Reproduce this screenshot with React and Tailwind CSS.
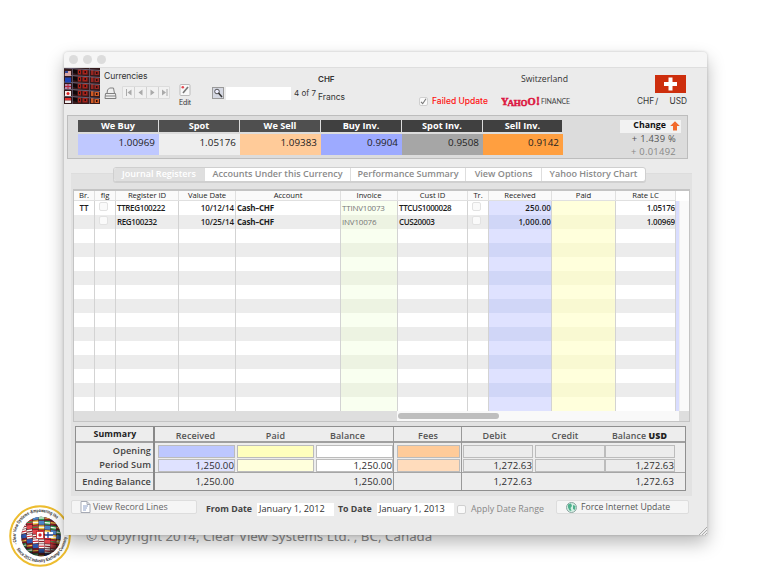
import React from "react";

const rates = [
  ["We Buy", "1.00969", "w-[81px]", "bg-[#4f4f4f]", "bg-[#bfc8ff]"],
  ["Spot", "1.05176", "w-[81px]", "bg-[#4f4f4f]", "bg-[#eeeeee]"],
  ["We Sell", "1.09383", "w-[81px]", "bg-[#4f4f4f]", "bg-[#ffcb99]"],
  ["Buy Inv.", "0.9904", "w-[81px]", "bg-[#404040]", "bg-[#9daaff]"],
  ["Spot Inv.", "0.9508", "w-[81px]", "bg-[#404040]", "bg-[#a6a6a6]"],
  ["Sell Inv.", "0.9142", "w-[80px]", "bg-[#404040]", "bg-[#ff9f40]"],
];

const plain = ["bg-white", "bg-[#ececec]"];
const columns = [
  { t: "Br.", w: "w-[21px]", bg: plain, cells: ["TT", ""], c: "text-center font-semibold" },
  { t: "flg", w: "w-[21px]", bg: plain, check: true },
  { t: "Register ID", w: "w-[63px]", bg: plain, cells: ["TTREG100222", "REG100232"], c: "pl-px tracking-[-0.35px] font-semibold" },
  { t: "Value Date", w: "w-[57px]", bg: plain, cells: ["10/12/14", "10/25/14"], c: "text-right pr-px tracking-[-0.05px] font-semibold" },
  { t: "Account", w: "w-[105px]", bg: plain, cells: ["Cash–CHF", "Cash–CHF"], c: "pl-px font-bold tracking-[-0.25px]" },
  { t: "Invoice", w: "w-[57px]", bg: ["bg-[#f9fff0]", "bg-[#edf3e2]"], cells: ["TTINV10073", "INV10076"], c: "pl-px text-[#777] tracking-[-0.2px] font-medium" },
  { t: "Cust ID", w: "w-[70px]", bg: plain, cells: ["TTCUS1000028", "CUS20003"], c: "pl-px tracking-[-0.35px] font-semibold" },
  { t: "Tr.", w: "w-[21px]", bg: plain, check: true },
  { t: "Received", w: "w-[63px]", bg: ["bg-[#dfe2ff]", "bg-[#d0d6f7]"], cells: ["250.00", "1,000.00"], c: "text-right pr-0 tracking-[0.1px] font-semibold" },
  { t: "Paid", w: "w-[64px]", bg: ["bg-[#ffffdc]", "bg-[#f9f9d2]"], cells: ["", ""], c: "" },
  { t: "Rate LC", w: "w-[60px]", bg: plain, cells: ["1.05176", "1.00969"], c: "text-right pr-0 tracking-[-0.2px] font-semibold" },
];
const rows = Array.from({ length: 15 }, (_, i) => i);

function Check({ on, faint }) {
  return (
    <span className={`flex h-[9px] w-[9px] items-center justify-center rounded-[2px] border bg-[#fafafa] ${faint ? "border-[#e2e2e2]" : "border-[#d0d0d0]"}`}>
      {on && (
        <svg width="7" height="7" viewBox="0 0 7 7"><path d="M1 3.8 2.7 5.7 6 .8" fill="none" stroke="#777" strokeWidth="1.1" /></svg>
      )}
    </span>
  );
}

function Photo() {
  return (
    <svg width="36" height="36" viewBox="0 0 36 36" className="block">
      <rect width="36" height="36" fill="#351a1c" />
      {[0, 7, 14, 21, 28].map((y) => (
        <g key={y}>
          <path d={`M9 ${y + 1}L13 ${y + 2}V${y + 6}L9 ${y + 5}Z`} fill="#100709" />
          <path d={`M14 ${y + 1.5}h3v5h-3zM18.500 ${y + 2}h5v4.500h-5z`} fill="#a3221a" />
          <path d={`M20.500 ${y + 3}h1.500v2h-1.500zM15 ${y + 3}h1v2h-1z`} fill="#280b0b" />
          <path d={`M27 ${y + 2}h2.500v5h-2.500zM30.500 ${y + 3}h4.500v4h-4.500z`} fill={y > 14 ? "#d05a24" : "#962621"} />
          <path d={`M32 ${y + 4}h1.500v2h-1.500z`} fill="#280b0b" />
          <path d={`M0 ${y}L36 ${y + 2.500}`} stroke="#77738b" strokeWidth=".8" />
        </g>
      ))}
      <path d="M25.500 0V36M8.500 0V36" stroke="#625c70" strokeWidth=".8" />
      <path d="M1 3h6v5H1z" fill="#d9a8a5" /><path d="M1 3h3v2H1z" fill="#344a99" />
      <path d="M1 9.500h6v5H1z" fill="#1b44b4" />
      <path d="M1 16h6v5H1z" fill="#b28fae" /><path d="M1 18.500h6M4 16v5" stroke="#b8233a" />
      <path d="M1 23h6v5H1z" fill="#f4f0ee" /><circle cx="4" cy="25.500" r="1.500" fill="#d22" />
      <path d="M1 30h6v2.500H1z" fill="#e03030" /><path d="M1 32.500h6V35H1z" fill="#f0f0f0" />
    </svg>
  );
}

function Globe() {
  const colors = ["#cf2730", "#f6f4f0", "#2d57ae", "#2f9a52", "#f0c544", "#e0444c", "#ffffff", "#8a2028", "#4a86c8"];
  const cells = [];
  for (let r = 0; r < 9; r++) for (let c = 0; c < 7; c++) cells.push([r, c]);
  return (
    <svg width="64" height="64" viewBox="0 0 64 64" className="overflow-visible">
      <defs>
        <clipPath id="ball"><circle cx="33" cy="32.500" r="19.800" /></clipPath>
        <radialGradient id="shade" cx=".45" cy=".4" r=".6">
          <stop offset=".65" stopColor="#000" stopOpacity="0" /><stop offset="1" stopColor="#000" stopOpacity=".7" />
        </radialGradient>
        <path id="ringTop" d="M9.200 40A23.800 23.800 0 0 1 54.500 24" />
        <path id="ringBottom" d="M8.500 45A27 27 0 0 0 58.500 28" />
      </defs>
      <circle cx="32" cy="32" r="29.800" fill="#fff" stroke="#edbd30" strokeWidth="2" />
      <g clipPath="url(#ball)">
        <rect x="12" y="11" width="44" height="44" fill="#5a1f26" />
        {cells.map(([r, c]) => (
          <g key={`${r}-${c}`} transform={`translate(${12.500 + c * 6.100} ${12 + r * 4.700}) rotate(${(c - 3) * 4})`}>
            <rect width="5.500" height="4" fill={colors[(r * 5 + c * 4) % 9]} />
            <rect y="1.400" width="5.500" height="1.200" fill={colors[(r * 2 + c * 7 + 3) % 9]} />
          </g>
        ))}
        <rect x="28.500" y="27.500" width="7" height="7" fill="#fff" stroke="#c22" strokeWidth=".8" /><circle cx="32" cy="31" r="1.700" fill="#d3202b" />
        <rect x="37" y="28" width="8" height="6" fill="#fff" /><path d="M37 31h8M40 28v6" stroke="#1d4597" strokeWidth="1.300" />
        <circle cx="33" cy="32.500" r="19.800" fill="url(#shade)" />
      </g>
      <g fill="#222" fontFamily="Liberation Sans, sans-serif" fontWeight="bold" fontSize="4.600">
        <text><textPath href="#ringTop" textLength="64" lengthAdjust="spacingAndGlyphs">- Clear View Systems -Empowering the</textPath></text>
        <text><textPath href="#ringBottom" textLength="68" lengthAdjust="spacingAndGlyphs">Since 2012 Industry Exchange Currency</textPath></text>
      </g>
    </svg>
  );
}

function Header() {
  return (
    <div className="flex h-[47px] font-['Inter','Liberation_Sans',sans-serif] text-[9px] leading-[12px] text-[#333]">
      <Photo />
      <div className="ml-[4px] mt-[2px] w-[109px]">
        <div className="text-[8.600px] tracking-[-0.1px]">Currencies</div>
        <div className="flex items-start">
          <svg width="13" height="13" viewBox="0 0 13 13" className="mt-[5px]" fill="none" stroke="#808080" strokeWidth="1">
            <path d="M3 6.500 3.500 3l2-2h4l1 5.500M1.500 6.500h10l.5 5H1zM1.500 9h10" fill="#eee" />
          </svg>
          <svg width="48" height="13" viewBox="0 0 48 13" className="ml-[5px] mt-[4px]">
            <path d="M.5.5h47v12H.5z" fill="#f1f1f1" stroke="#dcdcdc" /><path d="M12.500 1v11M24.500 1v11M36.500 1v11" stroke="#d2d2d2" />
            <path d="M9.500 3.500v6L5.500 6.500zM20.500 3.500v6l-4-3zM28.500 3.500v6l4-3zM40 3.500v6l4-3z" fill="#aaa" />
            <path d="M4.500 3v7M45 3v7" stroke="#aaa" />
          </svg>
          <div className="ml-[7px] mt-[2px] flex w-[16px] flex-col items-center">
            <svg width="12" height="12" viewBox="0 0 12 12" className="shrink-0">
              <rect x="1" y=".5" width="10" height="11" rx="1" fill="#f8f8f8" stroke="#bbb" />
              <path d="m4 9 5-6" stroke="#777" strokeWidth="1.600" /><circle cx="3.800" cy="3.200" r="1.300" fill="#e54850" />
            </svg>
            <span className="pt-px text-[7px] leading-[11px] tracking-[-0.1px]">Edit</span>
          </div>
        </div>
      </div>
      <div className="mt-[19px] flex h-[13px]">
        <svg width="12" height="12" viewBox="0 0 12 12" className="ml-[-1px]">
          <rect x=".5" y=".5" width="11" height="11" fill="#d5d8e2" stroke="#9a9a9a" />
          <circle cx="5" cy="4.500" r="2.300" fill="#eef" stroke="#555" /><path d="m6.500 6 3.500 4" stroke="#333" strokeWidth="1.500" />
        </svg>
        <div className="ml-[2px] h-[13px] w-[65px] bg-white" />
        <span className="ml-[3px] w-[24px] whitespace-nowrap text-[8px]">4 of 7</span>
      </div>
      <div className="w-[101px]">
        <div className="mt-[5px] text-[8px] font-semibold">CHF</div>
        <div className="mt-[6px] text-[8.500px]">Francs</div>
      </div>
      <div className="mt-[27px] flex h-[12px] items-center">
        <Check on />
        <span className="ml-[4px] w-[69px] whitespace-nowrap text-[8.500px] font-medium text-[#ff1111]">Failed Update</span>
      </div>
      <div className="w-[136px]">
        <div className="mt-[5px] pl-[20px] font-['Open_Sans',sans-serif] text-[8.700px]">Switzerland</div>
        <div className="mt-[10px] flex h-[12px] items-center">
          <svg width="40" height="13" viewBox="0 0 40 13">
            <g fill="#dc1640" stroke="#dc1640" strokeWidth=".5" fontFamily="Liberation Serif, serif" fontWeight="bold">
              <text x="0" y="9.500" fontSize="10.500">Y</text><text x="6.500" y="10.500" fontSize="9">A</text>
              <text x="12.800" y="10.500" fontSize="9">H</text><text x="19.800" y="10.500" fontSize="8.500">O</text>
              <text x="26.500" y="10" fontSize="10.500">O</text><text x="35" y="10" fontSize="12">!</text>
            </g>
          </svg>
          <span className="font-['Lato',sans-serif] text-[7px] tracking-[-0.15px] text-[#444]">FINANCE</span>
        </div>
      </div>
      <div className="flex flex-col items-center pt-[7px]">
        <svg width="31" height="18" viewBox="0 0 31 18" className="ml-[16px]">
          <rect width="31" height="18" fill="#cd2e0d" /><path d="M15.500 2.500v13M9 9h13" stroke="#fff" strokeWidth="4" />
        </svg>
        <div className="mt-[2px] flex w-[50px] justify-between text-[8.300px]"><span>CHF<span className="ml-[1px]">/</span></span><span>USD</span></div>
      </div>
    </div>
  );
}

function Rates() {
  return (
    <div className="ml-[3px] flex h-[44px] w-[621px] border border-[#bdbdbd] bg-[#dcdcdc] pl-[10px] pt-[4px]">
      {rates.map(([t, v, w, h, b]) => (
        <div key={t} className={w}>
          <div className={`${h} mr-px flex h-[12px] items-center justify-center text-[9.200px] font-bold text-white`}>{t}</div>
          <div className={`${b} mt-[2px] h-[21px] pr-[4px] pt-[3px] text-right text-[9.800px] font-medium leading-[12px] tracking-[0.05px] text-[#222]`}>{v}</div>
        </div>
      ))}
      <div className="ml-[57px] w-[61px] text-right">
        <div className="flex h-[13px] items-center justify-end bg-[#f2f2f2] pb-px pr-[1px] text-[8.800px] font-bold text-[#111]">
          Change
          <svg width="10" height="10" viewBox="0 0 10 10" className="ml-[4px]"><path d="M5 .3 9.800 5H7v4.500H3V5H.2z" fill="#f26a2c" /></svg>
        </div>
        <div className="pr-[5px] text-[9.400px] leading-[12.500px] tracking-[0.25px] text-[#555]">+ 1.439 %</div>
        <div className="pr-[5px] text-[9.400px] leading-[12.500px] tracking-[0.3px] text-[#888]">+ 0.01492</div>
      </div>
    </div>
  );
}

function Table() {
  return (
    <div className="mx-[2px] h-[233px] border border-t-2 border-[#c4c4c4] bg-[#dedede] text-[8px] leading-[12px] text-[#1c1c1c]">
      <div className="flex h-[220px] bg-white">
        {columns.map((col) => (
          <div key={col.t} className={`${col.w} shrink-0`}>
            <div className="h-[10px] whitespace-nowrap border-b border-r border-[#e0e0e0] bg-[#fafafa] text-center text-[7.700px] font-medium leading-[9px] tracking-[-0.05px]">{col.t}</div>
            {rows.map((i) => (
              <div key={i} className={`${col.bg[i % 2]} ${col.c || ""} h-[14px] overflow-hidden whitespace-nowrap border-r border-[#d3d3d3] pt-px`}>
                {col.check ? i < 2 && <div className="mr-[4px] flex justify-center"><Check faint /></div> : col.cells[i]}
              </div>
            ))}
          </div>
        ))}
        <div className="mt-[10px] h-[210px] w-[3px] bg-[#d9ddff]" />
        <div className="mt-[10px] h-[210px] grow border-l border-[#eee] bg-[#fafafa]" />
      </div>
      <div className="flex h-[10px] pl-[323px] pr-[10px]">
        <div className="grow bg-[#f9f9f9] py-[2px] pl-[1px]"><div className="h-[6px] w-[101px] rounded-full bg-[#bebebe]" /></div>
      </div>
    </div>
  );
}

function Field({ w, bg, children }) {
  return <div className={`${w} ${bg} h-[13px] shrink-0 border border-[#bcbcbc] text-right leading-[11px]`}>{children}</div>;
}

function SumRow({ label, fields, v, tones }) {
  const [a, b, c] = v;
  if (!fields) {
    return (
      <div className="flex h-[17px] items-center">
        <div className="w-[75px] text-right text-[9.200px] font-semibold text-[#444]">{label}</div>
        <div className="w-[83px] text-right">{a}</div>
        <div className="w-[158px] text-right">{b}</div>
        <div className="w-[140px] text-right">{c}</div>
        <div className="w-[142px] text-right">{c}</div>
      </div>
    );
  }
  return (
    <div className="flex h-[14px] items-center">
      <div className="w-[75px] pb-px text-right text-[9.200px] font-semibold text-[#444]">{label}</div>
      <div className="ml-[7px] flex gap-[2px]">
        <Field w="w-[77px]" bg={tones[0]}>{a}</Field>
        <Field w="w-[77px]" bg={tones[1]} />
        <Field w="w-[77px]" bg="bg-white">{b}</Field>
      </div>
      <div className="ml-[4px]"><Field w="w-[63px]" bg={tones[2]} /></div>
      <div className="ml-[3px] flex">
        <Field w="w-[70px]" bg="bg-[#ececec]">{c}</Field>
        <div className="ml-[2px]"><Field w="w-[70px]" bg="bg-[#ececec]" /></div>
        <Field w="w-[70px]" bg="bg-[#ececec]">{c}</Field>
      </div>
    </div>
  );
}

function Summary() {
  return (
    <div className="relative ml-[4px] mt-[4px] h-[65px] w-[611px] border border-[#8f8f8f] bg-[#ededed] text-[9.600px] font-medium leading-[12px] tracking-[0.08px] text-[#2c2c2c]">
      <div className="flex h-[16px] items-center border-b-2 border-[#a0a0a0] font-semibold tracking-[0.1px] text-[#555]">
        <div className="w-[78px] text-center text-[8.800px] font-bold text-[#222]">Summary</div>
        <div className="w-[83px] pt-[3px] text-center text-[9px]">Received</div>
        <div className="w-[77px] pt-[3px] text-center text-[9px]">Paid</div>
        <div className="w-[67px] pt-[3px] text-center text-[9px]">Balance</div>
        <div className="ml-[13px] w-[68px] pt-[3px] text-center text-[9px]">Fees</div>
        <div className="w-[65px] pt-[3px] text-center text-[9px]">Debit</div>
        <div className="w-[76px] pt-[3px] text-center text-[9px]">Credit</div>
        <div className="w-[73px] whitespace-nowrap pt-[3px] text-center text-[8.800px]">Balance <b className="text-[#222]">USD</b></div>
      </div>
      <div className="h-[30px] border-b border-[#a6a6a6] pt-px">
        <SumRow label="Opening" fields v={["", "", ""]} tones={["bg-[#bdc7ff]", "bg-[#ffffbd]", "bg-[#ffcb99]"]} />
        <SumRow label="Period Sum" fields v={["1,250.00", "1,250.00", "1,272.63"]} tones={["bg-[#dfe2ff]", "bg-[#ffffdc]", "bg-[#ffdcbc]"]} />
      </div>
      <SumRow label="Ending Balance" v={["1,250.00", "1,250.00", "1,272.63"]} />
      <div className="absolute inset-y-0 left-[77px] w-[2px] bg-[#888]" />
      <div className="absolute inset-y-0 left-[317px] w-px bg-[#999]" />
      <div className="absolute inset-y-0 left-[385px] w-px bg-[#999]" />
    </div>
  );
}

function Footer() {
  return (
    <div className="flex h-[39px] pl-[7px] pt-[4px] text-[9px] leading-[12px]">
      <div className="flex h-[14px] w-[126px] items-center rounded-[2px] border border-[#dddddd] bg-[#f5f5f5] pl-[8px] text-[8.900px] font-medium text-[#666]">
        <svg width="11" height="12" viewBox="0 0 11 12" className="mr-[2px]">
          <path d="M1 .5h6L10 3.500v8H1zM7 .5v3h3" fill="#fff" stroke="#a6aab4" /><path d="M3 5h5M3 7h4M3 9h3" stroke="#8fa2c9" />
        </svg>
        View Record Lines
      </div>
      <div className="ml-[9px] mt-px flex h-[16px] items-center whitespace-nowrap font-['Open_Sans',sans-serif]">
        <span className="w-[51px] text-[8.800px] font-bold text-[#444]">From Date</span>
        <span className="h-[13px] w-[77px] bg-white pl-[2px] text-[9.200px] font-medium text-[#333]">January 1, 2012</span>
        <span className="ml-[4px] w-[39px] text-[8.800px] font-bold text-[#444]">To Date</span>
        <span className="h-[13px] w-[77px] bg-white pl-[2px] text-[9.200px] font-medium text-[#333]">January 1, 2013</span>
        <span className="ml-[3px]"><Check /></span>
        <span className="ml-[5px] w-[74px] text-[8.900px] font-medium text-[#888]">Apply Date Range</span>
      </div>
      <div className="ml-[11px] flex h-[14px] w-[133px] items-center rounded-[2px] border border-[#dddddd] bg-[#f5f5f5] pl-[9px] text-[8.700px] font-medium text-[#555]">
        <svg width="11" height="11" viewBox="0 0 11 11" className="mr-[4px]">
          <circle cx="5.500" cy="5.500" r="5" fill="#d5f0e4" stroke="#8aa5a0" />
          <path d="M2 2.500 5 1.500 6 4 4.500 6 5.500 9 3.500 8.500 2 5.500zM7 3l2.500 1-.5 4-2-1z" fill="#4fb08d" />
        </svg>
        Force Internet Update
      </div>
      <svg width="9" height="9" viewBox="0 0 9 9" className="ml-auto self-end" stroke="#aaa"><path d="M1 9 9 1M4 9l5-5M7 9l2-2" /></svg>
    </div>
  );
}

export default function App() {
  const tabs = [
    ["Journal Registers", "w-[91px] bg-[#dfdfdf] text-white"],
    ["Accounts Under this Currency", "w-[146px] text-[#8a8a8a]"],
    ["Performance Summary", "w-[115px] text-[#8a8a8a]"],
    ["View Options", "w-[76px] text-[#8a8a8a]"],
    ["Yahoo History Chart", "w-[104px] text-[#8a8a8a]"],
  ];
  return (
    <div className="relative h-[577px] w-[770px] overflow-hidden bg-white pl-[64px] pt-[52px] font-['Open_Sans','Noto_Sans',sans-serif]">
      <div className="absolute left-[8px] top-[504px]"><Globe /></div>
      <div className="absolute left-[86px] top-[526px] whitespace-nowrap font-['Noto_Sans',sans-serif] text-[13.300px] leading-[20px] tracking-[0.02px] text-[#8c8c8c]">© Copyright 2014, Clear View Systems Ltd. , BC, Canada</div>
      <div className="relative h-[483px] w-[643px] rounded-t-[4px] bg-[#ebebeb] shadow-[0_8px_18px_rgba(0,0,0,0.28),0_0_3px_rgba(0,0,0,0.2)]">
        <div className="flex h-[16px] items-center gap-[5px] rounded-t-[4px] border-b border-[#dedede] bg-[#f6f6f6] pl-[5px]">
          <span className="h-[9px] w-[9px] rounded-full bg-[#dcdcdc]" />
          <span className="h-[9px] w-[9px] rounded-full bg-[#dcdcdc]" />
          <span className="h-[9px] w-[9px] rounded-full bg-[#dcdcdc]" />
        </div>
        <Header />
        <Rates />
        <div className="ml-[7px] mt-[8px] h-[329px] w-[621px] bg-[linear-gradient(to_bottom,transparent_0,transparent_6px,#d8d8d8_6px,#e2e2e2_7px,#e2e2e2_100%)]">
          <div className="mb-[7px] ml-[42px] flex h-[15px] w-[533px] overflow-hidden rounded-[3px] border border-[#cfcfcf] bg-white text-[9.050px] font-semibold leading-[12px] shadow-[0_1px_0_#d0d0d0]">
            {tabs.map(([t, c]) => (
              <div key={t} className={`${c} shrink-0 whitespace-nowrap border-r border-[#dedede] text-center`}>{t}</div>
            ))}
          </div>
          <Table />
          <Summary />
        </div>
        <Footer />
      </div>
    </div>
  );
}
